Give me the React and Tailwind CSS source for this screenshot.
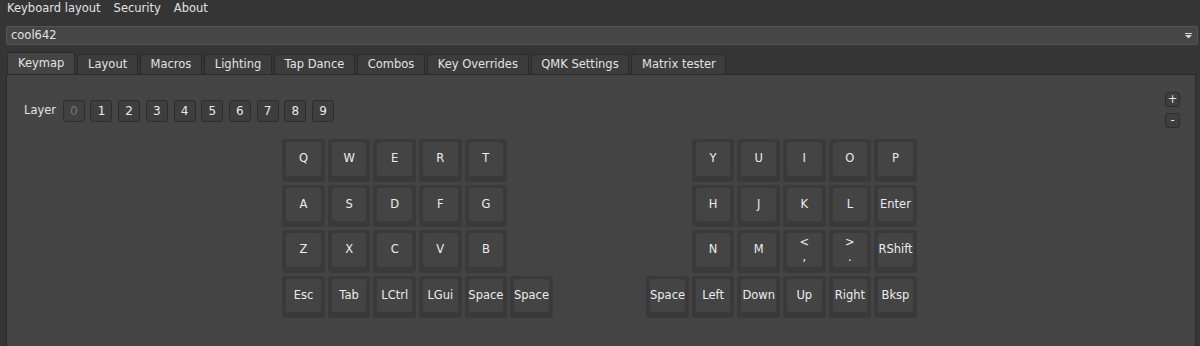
import { useState } from 'react'

const menus = ['Keyboard layout', 'Security', 'About']
const tabs = ['Keymap', 'Layout', 'Macros', 'Lighting', 'Tap Dance', 'Combos', 'Key Overrides', 'QMK Settings', 'Matrix tester']

// left half: 3 rows of 5, then the thumb row of 6
const leftRows = [
  ['Q', 'W', 'E', 'R', 'T'],
  ['A', 'S', 'D', 'F', 'G'],
  ['Z', 'X', 'C', 'V', 'B'],
  ['Esc', 'Tab', 'LCtrl', 'LGui', 'Space', 'Space'],
]
const rightRows = [
  ['Y', 'U', 'I', 'O', 'P'],
  ['H', 'J', 'K', 'L', 'Enter'],
  ['N', 'M', '<\n,', '>\n.', 'RShift'],
  ['Space', 'Left', 'Down', 'Up', 'Right', 'Bksp'],
]

function Key({ label }) {
  const lines = label.split('\n')
  return (
    <div className="w-[42.6px] h-[42.6px] rounded-[3px] bg-[#3a3a3a] pt-[3px] px-[4px] pb-[6px]">
      <div className="h-full rounded-[3px] bg-[#444444] flex flex-col items-center justify-center leading-[15px] text-[#ececec]">
        {lines.map((l, i) => (
          <span key={i}>{l}</span>
        ))}
      </div>
    </div>
  )
}

function Half({ rows, align }) {
  return (
    <div className="flex flex-col gap-[3px] w-[270.6px]">
      {rows.map((row, i) => (
        <div key={i} className={`flex gap-[3px] ${align === 'right' ? 'justify-end' : 'justify-start'}`}>
          {row.map((k, j) => (
            <Key key={j} label={k} />
          ))}
        </div>
      ))}
    </div>
  )
}

export default function App() {
  const [layer, setLayer] = useState(0)
  const [tab, setTab] = useState('Keymap')

  return (
    <div
      className="w-[1200px] h-[346px] overflow-hidden bg-[#353535] text-[#e2e2e2] text-[11.5px] select-none"
      style={{ fontFamily: '"DejaVu Sans", "Liberation Sans", sans-serif' }}
    >
      {/* Menu bar */}
      <div className="flex gap-[13px] pl-[7px] pt-[1px] h-[15px] leading-[14px]">
        {menus.map(m => (
          <span key={m}>{m}</span>
        ))}
      </div>

      {/* Keyboard selector */}
      <div className="mt-[11px] ml-[6px] mr-[2px] h-[19px] rounded-[2px] border border-[#555555] bg-[#464646] flex items-center justify-between pl-[4px] pr-[5px]">
        <span>cool642</span>
        <svg width="7" height="6" viewBox="0 0 7 6">
          <rect x="0" y="0" width="7" height="1" fill="#d8d8d8" />
          <path d="M0 2 L7 2 L3.5 5.5 Z" fill="#d8d8d8" />
        </svg>
      </div>

      {/* Tabs */}
      <div className="mt-[7px] ml-[7px] flex items-end gap-[2px] h-[22px]">
        {tabs.map(t => (
          <button
            key={t}
            onClick={() => setTab(t)}
            className={`rounded-t-[3px] border border-b-0 border-[#2b2b2b] ${
              t === tab
                ? 'h-[22px] bg-[#444444] px-[10px]'
                : 'h-[20px] bg-[#3c3c3c] px-[9.7px]'
            }`}
          >
            {t}
          </button>
        ))}
      </div>

      {/* Panel */}
      <div className="ml-[6px] mr-[4px] h-[300px] border border-[#2b2b2b] bg-[#444444]">
        <div className="flex items-center justify-between pt-[17px] pl-[17px] pr-[15px]">
          <div className="flex items-center gap-[5.7px] pt-[2px]">
            <span className="mr-[1px]">Layer</span>
            {[0, 1, 2, 3, 4, 5, 6, 7, 8, 9].map(n => (
              <button
                key={n}
                onClick={() => setLayer(n)}
                className={`w-[22px] h-[22px] rounded-[3px] border border-[#2e2e2e] flex items-center justify-center text-[12px] ${
                  n === layer ? 'bg-[#404040] text-[#777777]' : 'bg-[#3e3e3e] text-[#e8e8e8]'
                }`}
              >
                {n}
              </button>
            ))}
          </div>
          <div className="flex flex-col gap-[6px]">
            <button className="w-[15px] h-[15px] rounded-[3px] border border-[#2e2e2e] bg-[#3e3e3e] flex items-center justify-center leading-none">+</button>
            <button className="w-[15px] h-[15px] rounded-[3px] border border-[#2e2e2e] bg-[#3e3e3e] flex items-center justify-center leading-none">-</button>
          </div>
        </div>

        <div className="mt-[11px] flex justify-center gap-[93.4px] pr-[3px]">
          <Half rows={leftRows} align="left" />
          <Half rows={rightRows} align="right" />
        </div>
      </div>
    </div>
  )
}
